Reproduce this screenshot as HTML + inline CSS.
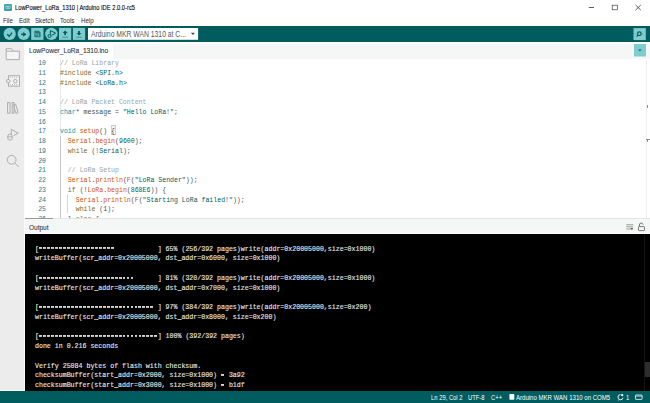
<!DOCTYPE html>
<html><head><meta charset="utf-8">
<style>
*{margin:0;padding:0;box-sizing:border-box}
html,body{width:650px;height:403px;overflow:hidden;background:#fff;font-family:"Liberation Sans",sans-serif;position:relative}
.a{position:absolute}
.t{white-space:pre;line-height:1;transform-origin:0 0;-webkit-text-stroke:0.1px currentColor}
#title{left:15.1px;top:5.1px;font-size:6.76px;color:#000;transform:scaleX(0.856)}
.menu{top:17.77px;font-size:7.12px;color:#2b2b2b;transform:scaleX(0.865);-webkit-text-stroke:0 transparent}
#side{left:0;top:42px;width:25px;height:349px;background:#ececec;border-right:1.8px solid #fbfbfb;border-bottom:1.2px solid #fbfbfb}
#tabbar{left:25px;top:44px;width:625px;height:15px;background:#f5f6f6}
#tab{left:25px;top:44px;width:88px;height:15px;background:#fff}
#editor{left:25px;top:59px;width:625px;height:160px;background:#fff;overflow:hidden}
.mono{font-family:"Liberation Mono",monospace;font-size:6.56px;line-height:9.75px;white-space:pre}
#ln{left:0;top:0;width:21px;text-align:right;color:#2a7b8c}
#code{left:35px;top:0;color:#434f54}
.cm{color:#95a5a6}.kw{color:#00979c}.fn{color:#d35400}.st{color:#005c5f}.pp{color:#7f6a22}
#outhdr{left:25px;top:218px;width:625px;height:16px;background:#f5f6f6;border-top:1px solid #e4e4e4;border-bottom:1px solid #fdfdfd}
#out{left:25px;top:234px;width:625px;height:157px;background:#000;overflow:hidden}
#outtext{left:10px;top:10.7px;color:#e6eaea;-webkit-text-stroke:0.12px #e6eaea;font-size:6.6px;line-height:9.74px}
.eq{color:transparent;-webkit-text-stroke:0 transparent;background-image:repeating-linear-gradient(90deg,transparent 0 0.5px,#d2d6d6 0.5px 3.3px,transparent 3.3px 3.96px);background-size:100% 1.9px;background-repeat:no-repeat;background-position:0 1.7px}
#status{left:0;top:391px;width:650px;height:12px;background:#005c5f}
.sb{top:394.8px;font-size:6.8px;color:#fff;transform:scaleX(0.86);-webkit-text-stroke:0 transparent}
</style></head><body>
<!-- title bar -->
<svg class="a" style="left:0;top:0" width="650" height="26" viewBox="0 0 650 26">
  <rect x="4" y="3.9" width="8" height="7.2" rx="1.3" fill="#3c9ea4"/>
  <rect x="4" y="3.9" width="8" height="3" rx="1.3" fill="#4aabb1"/>
  <circle cx="6.8" cy="7.5" r="1.15" fill="none" stroke="#d8f2f3" stroke-width="0.55"/><circle cx="9.2" cy="7.5" r="1.15" fill="none" stroke="#d8f2f3" stroke-width="0.55"/>
  <line x1="588.8" y1="7.5" x2="594" y2="7.5" stroke="#333" stroke-width="0.8"/>
  <rect x="612.2" y="5.2" width="5.2" height="4.6" fill="none" stroke="#333" stroke-width="0.65"/>
  <path d="M635.6 5 L640.8 10.1 M640.8 5 L635.6 10.1" stroke="#333" stroke-width="0.8"/>
</svg>
<div id="title" class="a t">LowPower_LoRa_1310 | Arduino IDE 2.0.0-rc5</div>
<div id="m1" class="a t menu" style="left:3px">File</div>
<div id="m2" class="a t menu" style="left:18.5px">Edit</div>
<div id="m3" class="a t menu" style="left:35.4px">Sketch</div>
<div id="m4" class="a t menu" style="left:60px">Tools</div>
<div id="m5" class="a t menu" style="left:80.8px">Help</div>
<!-- toolbar -->
<svg class="a" style="left:0;top:26px" width="650" height="16" viewBox="0 26 650 16">
  <rect x="0" y="26" width="650" height="16" fill="#005c5f"/>
  <circle cx="9.7" cy="33.9" r="6.1" fill="#7fcbcd"/>
  <path d="M7.2 34.2 L9.2 36.3 L12 32.6" fill="none" stroke="#005c5f" stroke-width="1.3"/>
  <circle cx="23.7" cy="33.9" r="6.1" fill="#7fcbcd"/>
  <path d="M21.2 34.3 H24.2" stroke="#005c5f" stroke-width="1.6"/>
  <path d="M23.2 31.9 L26.4 34.3 L23.2 36.7 Z" fill="#005c5f"/>
  <rect x="31.2" y="27.9" width="12.3" height="12" fill="#7fcbcd"/>
  <path d="M34.4 30.8 H38.8 L40.6 32.6 V37.3 H34.4 Z" fill="#1f7a7d"/>
  <path d="M36 36.2 V33 L38.5 36.2 V33" fill="none" stroke="#7fcbcd" stroke-width="0.6"/>
  <circle cx="51.4" cy="33.9" r="6.2" fill="#7fcbcd"/>
  <path d="M50.4 34.6 V30.5 L55.7 33.2 L51.6 35.3" fill="none" stroke="#005c5f" stroke-width="0.95"/>
  <circle cx="49.5" cy="36" r="1.5" fill="#7fcbcd" stroke="#005c5f" stroke-width="1"/>
  <rect x="59" y="27.9" width="12.2" height="12" fill="#7fcbcd"/>
  <path d="M65.1 30.4 L67.6 33 H66 V35 H64.2 V33 H62.6 Z" fill="#005c5f"/>
  <rect x="62.2" y="36.7" width="6" height="0.9" fill="#3c8f92"/>
  <rect x="72.9" y="27.9" width="12.2" height="12" fill="#7fcbcd"/>
  <path d="M79 35.6 L76.5 33 H78.1 V30.9 H79.9 V33 H81.5 Z" fill="#005c5f"/>
  <rect x="76" y="36.7" width="6" height="0.9" fill="#3c8f92"/>
  <rect x="88" y="28" width="110.1" height="11.8" fill="#fff"/>
  <path d="M190.9 32.7 H194.9 L192.9 34.9 Z" fill="#3f4a50"/>
  <rect x="633.5" y="28.1" width="12.3" height="12" fill="#7fcbcd"/>
  <circle cx="639.4" cy="33.7" r="1.8" fill="none" stroke="#005c5f" stroke-width="1.2"/>
  <path d="M638 35.2 L636.6 36.7" stroke="#005c5f" stroke-width="1.2"/>
  <circle cx="642.8" cy="34" r="0.45" fill="#2f7f82"/>
  <circle cx="635.8" cy="34" r="0.45" fill="#2f7f82"/>
</svg>
<div id="dd" class="a t" style="left:91.4px;top:30.55px;font-size:8.2px;color:#4e5b61;transform:scaleX(0.83);-webkit-text-stroke:0 transparent">Arduino MKR WAN 1310 at C...</div>
<!-- sidebar -->
<div id="side" class="a"></div>
<svg class="a" style="left:0;top:42px" width="25" height="140" viewBox="0 42 25 140">
  <g fill="none" stroke="#aaaaaa" stroke-width="0.95">
    <path d="M6.2 59.6 V48.7 H11.6 L13 51.2 H19.4 V59.6 Z" fill="#f4f4f4"/>
    <path d="M6.2 51.2 H13"/>
    <rect x="8.5" y="75.7" width="11" height="10.5" fill="#f2f2f2"/>
    <circle cx="8.3" cy="81.2" r="1.8" fill="#ececec"/>
    <circle cx="15.3" cy="81.2" r="1.8"/>
    <path d="M10 77.2 H18 M10 84.7 H18" stroke-dasharray="1 1" stroke-width="0.8"/>
    <rect x="7.6" y="102.6" width="2.4" height="10.6"/>
    <rect x="12.2" y="102.6" width="1.9" height="10.6"/>
    <path d="M13.4 105 L15.6 104.2 L18.2 112.6 L16 113.4 Z"/>
    <path d="M11.3 134 V129.3 L18.2 133.2 L13.9 135.6"/>
    <path d="M7.8 136.2 a2.2 2.2 0 0 1 4.4 0 V138 a2.2 2.2 0 0 1 -4.4 0 Z"/>
    <path d="M7.6 136.8 H12.4" stroke-width="0.8"/>
    <circle cx="11.6" cy="159.8" r="4.4"/>
    <path d="M14.8 163 L18.8 167"/>
  </g>
</svg>
<!-- tabs -->
<div id="tabbar" class="a"></div>
<div id="tab" class="a"></div>
<div id="tabt" class="a t" style="left:28.9px;top:46.5px;font-size:7.56px;color:#333;transform:scaleX(0.874)">LowPower_LoRa_1310.ino</div>
<svg class="a" style="left:634px;top:44px" width="12" height="13" viewBox="0 0 12 13">
  <rect x="0" y="0" width="12" height="12.5" fill="#7fcbcd"/>
  <path d="M4.2 5.6 H7.6 L5.9 7.3 Z" fill="#005c5f"/>
</svg>
<!-- editor -->
<div id="editor" class="a">
<div class="a" style="left:34.8px;top:0;width:0.8px;height:160px;background:#e8e8e8"></div>
<div class="a" style="left:34.6px;top:77px;width:0.9px;height:83px;background:#c8c8c8"></div>
<div class="a" style="left:42.4px;top:135px;width:0.8px;height:18.6px;background:#d6d6d6"></div>
<div class="a" style="left:85.9px;top:66.4px;width:4.8px;height:10px;background:#f2f2f2;border:0.8px solid #cdcdcd"></div>
<div id="ln" class="a mono">10
11
12
13
14
15
16
17
18
19
20
21
22
23
24
25
26</div>
<div id="code" class="a mono"><span class="cm">// LoRa Library</span>
<span class="pp">#include</span> <span class="st">&lt;SPI.h&gt;</span>
<span class="pp">#include</span> <span class="st">&lt;LoRa.h&gt;</span>

<span class="cm">// LoRa Packet Content</span>
<span class="kw">char</span>* message = <span class="st">"Hello LoRa!"</span>;

<span class="kw">void</span> <span class="fn">setup</span>() {
  <span class="fn">Serial</span>.<span class="fn">begin</span>(<span class="st">9600</span>);
  <span class="pp">while</span> (!<span class="st">Serial</span>);

  <span class="cm">// LoRa Setup</span>
  <span class="fn">Serial</span>.<span class="fn">println</span>(<span class="fn">F</span>(<span class="st">"LoRa Sender"</span>));
  <span class="pp">if</span> (!<span class="fn">LoRa</span>.<span class="fn">begin</span>(<span class="st">868E6</span>)) {
    <span class="fn">Serial</span>.<span class="fn">println</span>(<span class="fn">F</span>(<span class="st">"Starting LoRa failed!"</span>));
    <span class="pp">while</span> (<span class="st">1</span>);
  } <span class="pp">else</span> {</div>
<div class="a" style="left:620.5px;top:0;width:0.8px;height:160px;background:#f0f0f0"></div>
<div class="a" style="left:621.8px;top:46px;width:1.2px;height:2.5px;background:#8c8c8c"></div>
<div class="a" style="left:620.6px;top:79.6px;width:4.4px;height:1px;background:#8c8c8c"></div>
<div class="a" style="left:621.8px;top:80px;width:1.1px;height:3px;background:#8c8c8c"></div>
</div>
<!-- output -->
<div id="outhdr" class="a"></div>
<div class="a" style="left:25px;top:217.8px;width:27.6px;height:1.4px;background:#9a9a9a"></div>
<div id="outl" class="a t" style="left:29px;top:224.6px;font-size:7.12px;color:#3a3a3a;transform:scaleX(0.916)">Output</div>
<svg class="a" style="left:620px;top:219px" width="30" height="15" viewBox="620 219 30 15">
  <rect x="626.2" y="224.3" width="7" height="1" fill="#9b9b9b"/>
  <rect x="626.2" y="226.3" width="7" height="1" fill="#9b9b9b"/>
  <rect x="626.2" y="228.5" width="4.5" height="1" fill="#9b9b9b"/>
  <rect x="630.8" y="228" width="2" height="1.5" fill="#55512a"/>
  <rect x="638.5" y="226.6" width="6" height="4" rx="0.6" fill="#f8f8f8" stroke="#6a6a6a" stroke-width="0.9"/>
  <path d="M639.4 226.6 V225 a1.8 1.8 0 0 1 3.6 -0.3" fill="none" stroke="#6a6a6a" stroke-width="0.9"/>
</svg>
<div id="out" class="a">
<div id="outtext" class="a mono">[<span class="eq">===================</span>           ] 65% (256/392 pages)write(addr=0x20005000,size=0x1000)
writeBuffer(scr_addr=0x20005000, dst_addr=0x6000, size=0x1000)

[<span class="eq">========================</span>      ] 81% (320/392 pages)write(addr=0x20005000,size=0x1000)
writeBuffer(scr_addr=0x20005000, dst_addr=0x7000, size=0x1000)

[<span class="eq">=============================</span> ] 97% (384/392 pages)write(addr=0x20005000,size=0x200)
writeBuffer(scr_addr=0x20005000, dst_addr=0x8000, size=0x200)

[<span class="eq">==============================</span>] 100% (392/392 pages)
done in 0.216 seconds

Verify 25084 bytes of flash with checksum.
checksumBuffer(start_addr=0x2000, size=0x1000) <span class="eq">=</span> 3a92
checksumBuffer(start_addr=0x3000, size=0x1000) <span class="eq">=</span> b1df</div>
<div class="a" style="left:619.3px;top:0;width:0.9px;height:157px;background:#161616"></div>
<div class="a" style="left:620.4px;top:127.5px;width:4.6px;height:15px;background:#2f2c29"></div>
</div>
<!-- status -->
<div id="status" class="a"></div>
<div id="s1" class="a t sb" style="left:430.7px">Ln 29, Col 2</div>
<div id="s2" class="a t sb" style="left:468.3px">UTF-8</div>
<div id="s3" class="a t sb" style="left:490.7px">C++</div>
<div id="s5" class="a t sb" style="left:625.8px">1</div>
<div id="s4" class="a t sb" style="left:516.2px;transform:scaleX(0.889)">Arduino MKR WAN 1310 on COM5</div>
<svg class="a" style="left:500px;top:391px" width="150" height="12" viewBox="500 391 150 12">
  <rect x="509.4" y="393.9" width="4.9" height="5.8" rx="0.8" fill="#fff"/>
  <path d="M620.5 394.6 a2.6 2.6 0 1 0 2.6 3.2" fill="none" stroke="#fff" stroke-width="0.9"/>
  <circle cx="622.2" cy="395.2" r="1.1" fill="#fff"/>
  <path d="M619.2 399.4 L618.3 400.5" stroke="#fff" stroke-width="0.8"/>
  <rect x="635.5" y="395" width="6.6" height="4.4" rx="0.5" fill="none" stroke="#fff" stroke-width="0.8"/>
  <path d="M635.5 396.2 H642.1" stroke="#fff" stroke-width="0.6"/>
</svg>
</body></html>
